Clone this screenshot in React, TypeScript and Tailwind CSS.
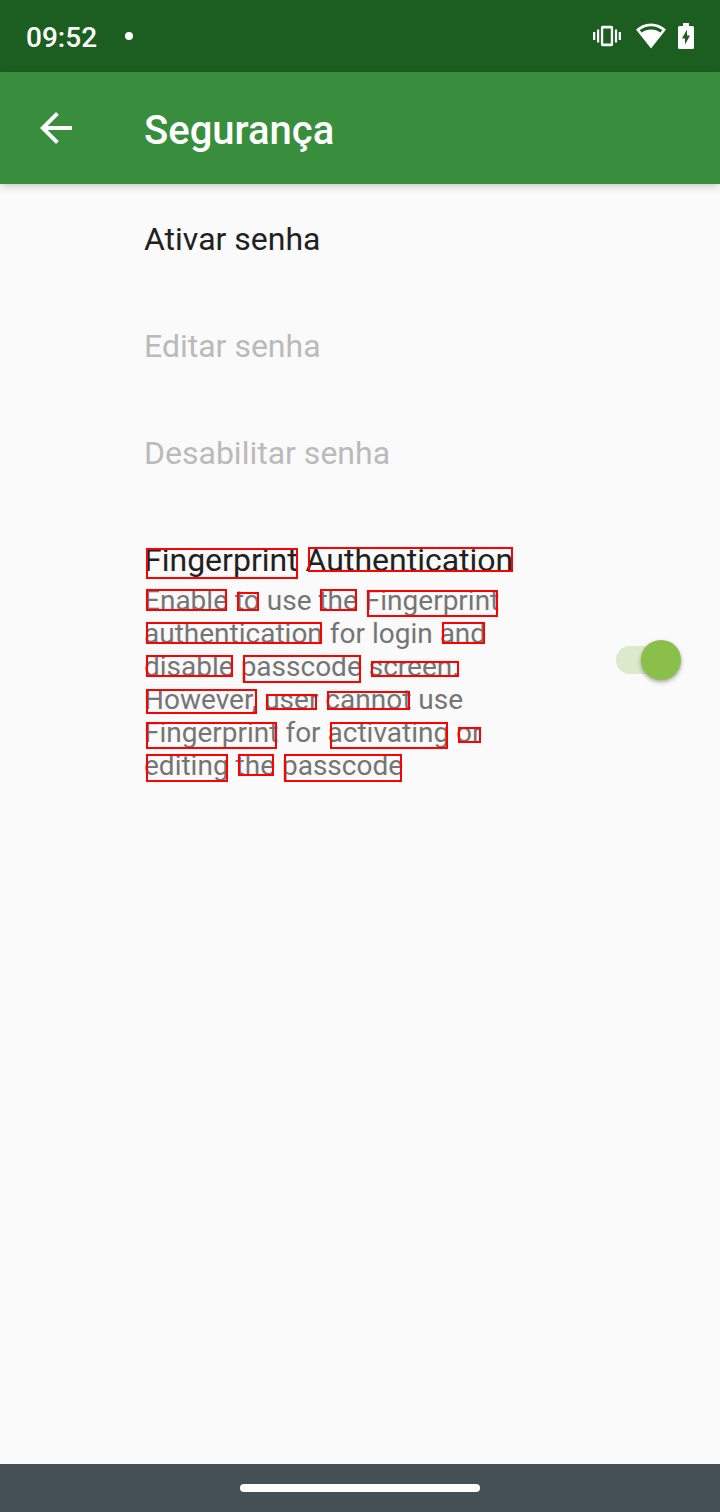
import type { ReactNode } from "react";

const frames = {
  tall: "top-[5px] h-[22px] right-px",
  middle: "top-2 h-[19px] right-px",
  low: "top-[11px] h-4 right-px",
  full: "top-[5px] h-7 right-px",
  capital: "top-[6px] h-[27px] right-px",
  comma: "top-[6px] h-[25px] right-0",
  title: "top-[6px] h-[25px] right-0",
  titleFull: "top-[7px] h-[31px] right-0",
};

function Word({ frame, children }: { frame: keyof typeof frames; children: ReactNode }) {
  return (
    <span className="relative inline-block">
      {children}
      <span aria-hidden="true" className={`absolute left-0.5 border-2 border-[#ff0000] ${frames[frame]}`} />
    </span>
  );
}

function StatusBar() {
  return (
    <div className="flex h-[72px] items-center justify-between bg-[#1b5e20] px-[26px] text-white">
      <div className="flex items-center gap-7">
        <time className="pt-0.5 text-[28px] font-medium leading-[33px]">09:52</time>
        <span className="size-2 rounded-full bg-white" />
      </div>
      <div className="flex items-center">
        <svg viewBox="0 0 28 24" className="h-6 w-7" fill="currentColor" aria-label="Vibrar">
          <path d="M0 8h2.300v8H0zM4 5.500h2.200v13H4zM21.900 5.500h2.200v13h-2.200zM25.700 8H28v8h-2.300z" />
          <path fillRule="evenodd" d="M9.600 1.800h8.800a1.700 1.700 0 0 1 1.700 1.700v17a1.700 1.700 0 0 1-1.700 1.700H9.600a1.700 1.700 0 0 1-1.700-1.700v-17a1.700 1.700 0 0 1 1.700-1.700zM10.200 4.600v14.800h7.600V4.600z" />
        </svg>
        <svg viewBox="0 0 30 26" className="ml-[15px] h-[26px] w-[30px]" fill="currentColor" aria-label="Wi-Fi">
          <path fillRule="evenodd" d="M15 .5C9.300.5 4.200 2.700 0 6.500L15 25.500 30 6.500C25.800 2.700 20.700.5 15 .5zM3.700 7C7 4.500 10.800 3.200 15 3.200S23 4.500 26.300 7l-1.900 2.400C21.600 7.500 18.500 6.500 15 6.500S8.400 7.500 5.600 9.400z" />
        </svg>
        <svg viewBox="0 0 16 26" className="ml-3 h-[26px] w-4" fill="currentColor" aria-label="Bateria carregando">
          <path fillRule="evenodd" d="M5 0h6v3h3.500A1.500 1.500 0 0 1 16 4.500v20a1.500 1.500 0 0 1-1.500 1.500h-13A1.500 1.500 0 0 1 0 24.500v-20A1.500 1.500 0 0 1 1.500 3H5zM9 6.500L4 15.500h3v6l5-9H9z" />
        </svg>
      </div>
    </div>
  );
}

export default function App() {
  return (
    <div className="flex min-h-screen flex-col bg-[#fafafa] font-[Roboto,sans-serif] text-[#212121]">
      <StatusBar />
      <header className="flex h-28 items-center bg-[#388e3c] px-8 text-white shadow-[0_2px_8px_rgba(0,0,0,0.2)]">
        <button type="button" aria-label="Voltar" className="flex size-12 items-center justify-center">
          <svg viewBox="0 0 24 24" className="size-12" fill="currentColor">
            <path d="M20 11H7.830l5.590-5.590L12 4l-8 8 8 8 1.410-1.410L7.830 13H20v-2z" />
          </svg>
        </button>
        <h1 className="ml-16 mt-1 text-[40px] font-medium leading-[47px]">Segurança</h1>
      </header>
      <main className="flex-1 text-[32px] leading-[38px]">
        <button type="button" className="block w-full pb-[33px] pl-36 pr-8 pt-9 text-left">Ativar senha</button>
        <button type="button" disabled className="block w-full pb-[33px] pl-36 pr-8 pt-9 text-left text-[#bababa]">Editar senha</button>
        <button type="button" disabled className="block w-full pb-[33px] pl-36 pr-8 pt-9 text-left text-[#bababa]">Desabilitar senha</button>
        <div className="flex items-center justify-between pb-[33px] pl-36 pr-10 pt-9">
          <label htmlFor="fingerprint" className="flex max-w-[424px] flex-1 flex-col gap-[5px]">
            <span>
              <Word frame="titleFull">Fingerprint</Word> <Word frame="title">Authentication</Word>
            </span>
            <span className="text-[28px] leading-[33px] text-[#757575]">
              <Word frame="tall">Enable</Word> <Word frame="middle">to</Word> use <Word frame="tall">the</Word>{" "}
              <Word frame="capital">Fingerprint</Word> <Word frame="tall">authentication</Word> for login{" "}
              <Word frame="tall">and</Word> <Word frame="tall">disable</Word> <Word frame="full">passcode</Word>{" "}
              <Word frame="low">screen.</Word> <Word frame="comma">However,</Word> <Word frame="low">user</Word>{" "}
              <Word frame="middle">cannot</Word> use <Word frame="capital">Fingerprint</Word> for{" "}
              <Word frame="capital">activating</Word> <Word frame="low">or</Word> <Word frame="full">editing</Word>{" "}
              <Word frame="tall">the</Word> <Word frame="full">passcode</Word>
            </span>
          </label>
          <input
            id="fingerprint"
            type="checkbox"
            role="switch"
            defaultChecked
            className="relative mb-1 h-7 w-16 shrink-0 appearance-none rounded-full bg-[#9e9e9e]/40 after:absolute after:-top-1.5 after:left-0 after:size-10 after:rounded-full after:bg-[#f5f5f5] after:shadow-[0_2px_4px_rgba(0,0,0,0.35)] after:content-[''] checked:bg-[#dceacb] checked:after:left-[25px] checked:after:bg-[#8ac04a]"
          />
        </div>
      </main>
      <footer className="flex h-12 items-center justify-center bg-[#455056]">
        <div className="h-2 w-60 rounded-full bg-white" />
      </footer>
    </div>
  );
}
